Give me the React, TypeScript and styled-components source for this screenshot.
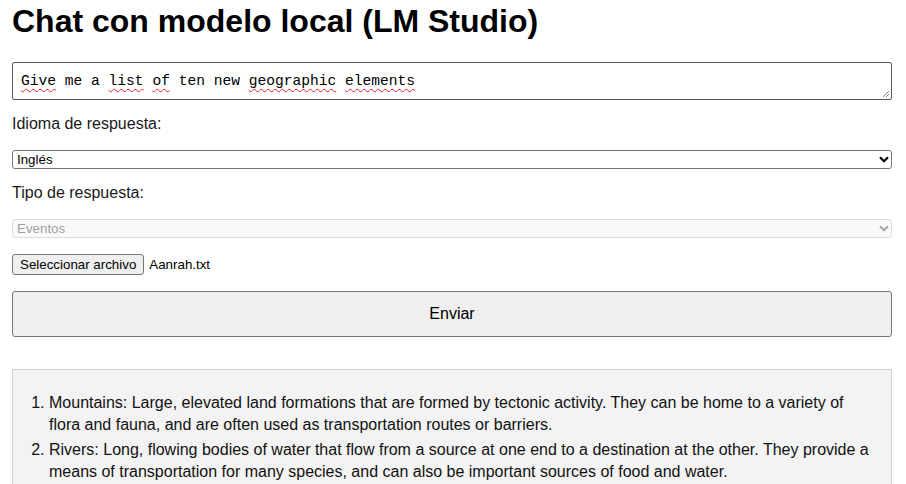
import React from "react";
import styled, { createGlobalStyle } from "styled-components";

const GlobalStyle = createGlobalStyle`
  html, body { margin: 0; padding: 0; background: #ffffff; }
  body { font-family: "Liberation Sans", Arial, sans-serif; color: #000; }
`;

const Page = styled.main`
  width: 880px;
  padding: 3px 0 0 12px;
  display: flex;
  flex-direction: column;
`;

const Title = styled.h1`
  margin: 0 0 22px;
  font-size: 32px;
  line-height: 37px;
  font-weight: 700;
`;

const PromptBox = styled.div`
  position: relative;
  box-sizing: border-box;
  height: 38px;
  margin-bottom: 15px;
  border: 1px solid #555555;
  border-radius: 2px;
  padding: 0 8px;
  display: flex;
  align-items: center;
  font-family: "Liberation Mono", "DejaVu Sans Mono", monospace;
  font-size: 14.6px;
  color: #000;
`;

const PromptText = styled.span`
  white-space: pre;
`;

const Misspelled = styled.span`
  text-decoration: underline wavy #e02020;
  text-decoration-thickness: 1px;
  text-underline-offset: 3px;
`;

const Grip = styled.svg`
  position: absolute;
  right: 1px;
  bottom: 1px;
  width: 9px;
  height: 9px;
`;

const Label = styled.label<{ $gap: number }>`
  display: block;
  font-size: 16px;
  line-height: 18px;
  color: #1a1a1a;
  margin-bottom: ${(p) => p.$gap}px;
`;

const SelectWrap = styled.div<{ $gap: number }>`
  position: relative;
  margin-bottom: ${(p) => p.$gap}px;
`;

const Select = styled.select<{ disabled?: boolean }>`
  appearance: none;
  -webkit-appearance: none;
  display: block;
  box-sizing: border-box;
  width: 100%;
  height: 19px;
  margin: 0;
  padding: 0 0 0 4px;
  font-family: "Liberation Sans", Arial, sans-serif;
  font-size: 13.33px;
  line-height: 17px;
  border-radius: 3px;
  border: 1px solid ${(p) => (p.disabled ? "#dcdcdc" : "#767676")};
  background: ${(p) => (p.disabled ? "#fafafa" : "#ffffff")};
  color: ${(p) => (p.disabled ? "#a0a0a0" : "#000")};
  opacity: 1;
`;

const Chevron = styled.svg<{ $muted?: boolean }>`
  position: absolute;
  right: 3px;
  top: 6px;
  width: 10px;
  height: 7px;
  pointer-events: none;
  color: ${(p) => (p.$muted ? "#a8a8a8" : "#000")};
`;

const FileRow = styled.div`
  display: flex;
  align-items: center;
  gap: 5px;
  height: 21px;
  margin-bottom: 16px;
  font-size: 13.33px;
`;

const FileButton = styled.button`
  box-sizing: border-box;
  height: 21px;
  padding: 0 7px;
  font-family: "Liberation Sans", Arial, sans-serif;
  font-size: 13.33px;
  color: #000;
  background: #efefef;
  border: 1px solid #767676;
  border-radius: 3px;
`;

const FileName = styled.span`
  font-size: 13.33px;
  color: #000;
`;

const SendButton = styled.button`
  box-sizing: border-box;
  height: 46px;
  width: 100%;
  margin-bottom: 32px;
  font-family: "Liberation Sans", Arial, sans-serif;
  font-size: 16px;
  color: #000;
  background: #efefef;
  border: 1px solid #767676;
  border-radius: 3px;
`;

const ResponseBox = styled.section`
  box-sizing: border-box;
  background: #f3f3f3;
  border: 1px solid #d0d0d0;
  padding: 6px 16px;
`;

const List = styled.ol`
  margin: 16px 0;
  padding-left: 20px;
  font-size: 16px;
  line-height: 22px;
  color: #111;
`;

const Item = styled.li`
  margin-bottom: 3px;
`;

const items = [
  "Mountains: Large, elevated land formations that are formed by tectonic activity. They can be home to a variety of flora and fauna, and are often used as transportation routes or barriers.",
  "Rivers: Long, flowing bodies of water that flow from a source at one end to a destination at the other. They provide a means of transportation for many species, and can also be important sources of food and water.",
];

const ChevronIcon = ({ muted }: { muted?: boolean }) => (
  <Chevron $muted={muted} viewBox="0 0 10 7" aria-hidden>
    <path d="M1 1.2 L5 5.2 L9 1.2" fill="none" stroke="currentColor" strokeWidth="2.2" />
  </Chevron>
);

export default function App() {
  return (
    <>
      <GlobalStyle />
      <Page>
        <Title>Chat con modelo local (LM Studio)</Title>
        <PromptBox role="textbox" aria-multiline="true">
          <PromptText>
            <Misspelled>Give</Misspelled>
            {" me a "}
            <Misspelled>list</Misspelled>
            {" "}
            <Misspelled>of</Misspelled>
            {" ten new "}
            <Misspelled>geographic</Misspelled>
            {" "}
            <Misspelled>elements</Misspelled>
          </PromptText>
          <Grip viewBox="0 0 9 9" aria-hidden>
            <path d="M8 2 L2 8 M8 5 L5 8" stroke="#8a8a8a" strokeWidth="1" />
          </Grip>
        </PromptBox>
        <Label $gap={17}>Idioma de respuesta:</Label>
        <SelectWrap $gap={15}>
          <Select defaultValue="en">
            <option value="en">Inglés</option>
            <option value="es">Español</option>
          </Select>
          <ChevronIcon />
        </SelectWrap>
        <Label $gap={17}>Tipo de respuesta:</Label>
        <SelectWrap $gap={16}>
          <Select disabled defaultValue="ev">
            <option value="ev">Eventos</option>
          </Select>
          <ChevronIcon muted />
        </SelectWrap>
        <FileRow>
          <FileButton type="button">Seleccionar archivo</FileButton>
          <FileName>Aanrah.txt</FileName>
        </FileRow>
        <SendButton type="button">Enviar</SendButton>
        <ResponseBox>
          <List>
            {items.map((t, i) => (
              <Item key={i}>{t}</Item>
            ))}
          </List>
        </ResponseBox>
      </Page>
    </>
  );
}
